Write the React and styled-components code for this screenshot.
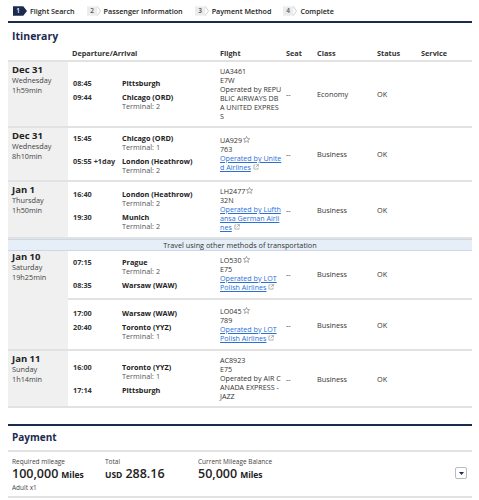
import React from 'react';
import styled, { createGlobalStyle } from 'styled-components';

const GlobalStyle = createGlobalStyle`
  body {
    margin: 0;
    background: #fff;
    font-family: "Open Sans", "Liberation Sans", sans-serif;
    color: #333;
  }
`;

const NAVY = '#1b2b50';

const days = [
  {
    date: 'Dec 31', weekday: 'Wednesday', duration: '1h59min',
    segments: [{
      stops: [
        { time: '08:45', place: 'Pittsburgh' },
        { time: '09:44', place: 'Chicago (ORD)', terminal: 'Terminal: 2' },
      ],
      flight: 'UA3461', aircraft: 'E7W', operator: 'Operated by REPUBLIC AIRWAYS DBA UNITED EXPRESS',
      seat: '--', cls: 'Economy', status: 'OK',
    }],
  },
  {
    date: 'Dec 31', weekday: 'Wednesday', duration: '8h10min',
    segments: [{
      stops: [
        { time: '15:45', place: 'Chicago (ORD)', terminal: 'Terminal: 1' },
        { time: '05:55 +1day', place: 'London (Heathrow)', terminal: 'Terminal: 2' },
      ],
      flight: 'UA929', star: true, aircraft: '763', operator: 'Operated by United Airlines', link: true,
      seat: '--', cls: 'Business', status: 'OK',
    }],
  },
  {
    date: 'Jan 1', weekday: 'Thursday', duration: '1h50min',
    segments: [{
      stops: [
        { time: '16:40', place: 'London (Heathrow)', terminal: 'Terminal: 2' },
        { time: '19:30', place: 'Munich', terminal: 'Terminal: 2' },
      ],
      flight: 'LH2477', star: true, aircraft: '32N', operator: 'Operated by Lufthansa German Airlines', link: true,
      seat: '--', cls: 'Business', status: 'OK',
    }],
    notice: 'Travel using other methods of transportation',
  },
  {
    date: 'Jan 10', weekday: 'Saturday', duration: '19h25min',
    segments: [
      {
        stops: [
          { time: '07:15', place: 'Prague', terminal: 'Terminal: 2' },
          { time: '08:35', place: 'Warsaw (WAW)' },
        ],
        flight: 'LO530', star: true, aircraft: 'E75', operator: 'Operated by LOT Polish Airlines', link: true,
        seat: '--', cls: 'Business', status: 'OK',
      },
      {
        stops: [
          { time: '17:00', place: 'Warsaw (WAW)' },
          { time: '20:40', place: 'Toronto (YYZ)', terminal: 'Terminal: 1' },
        ],
        flight: 'LO045', star: true, aircraft: '789', operator: 'Operated by LOT Polish Airlines', link: true,
        seat: '--', cls: 'Business', status: 'OK',
      },
    ],
  },
  {
    date: 'Jan 11', weekday: 'Sunday', duration: '1h14min',
    segments: [{
      stops: [
        { time: '16:00', place: 'Toronto (YYZ)', terminal: 'Terminal: 1' },
        { time: '17:14', place: 'Pittsburgh' },
      ],
      flight: 'AC8923', aircraft: 'E75', operator: 'Operated by AIR CANADA EXPRESS - JAZZ',
      seat: '--', cls: 'Business', status: 'OK',
    }],
  },
];

const steps = ['Flight Search', 'Passenger Information', 'Payment Method', 'Complete'];

const Page = styled.div`
  padding: 0 7px 0 8px;
  width: 464px;
`;

const Steps = styled.nav`
  display: flex;
  align-items: center;
  height: 21px;
  padding-left: 5px;
  gap: 12px;
  border-bottom: 2px solid ${NAVY};
`;

const Step = styled.div`
  display: flex;
  align-items: center;
  gap: 3px;
  font-size: 7.2px;
  font-weight: 600;
  color: #222;
`;

const StepBadge = ({ n, active }) => (
  <svg width="14" height="10" viewBox="0 0 15 10">
    {active ? (
      <polygon points="0,0 11,0 15,5 11,10 0,10" fill={NAVY} />
    ) : (
      <>
        <rect x="0" y="0" width="11" height="10" fill="#ececec" />
        <polyline points="11,0 14.5,5 11,10" fill="none" stroke="#cfcfcf" strokeWidth="1" />
      </>
    )}
    <text x="5.5" y="7.6" fontSize="7" textAnchor="middle" fill={active ? '#fff' : '#555'}
      fontFamily="Open Sans, sans-serif" fontWeight="600">{n}</text>
  </svg>
);

const Heading = styled.h2`
  margin: 0;
  padding: 5px 0 0 4px;
  height: 18px;
  font-size: 10.5px;
  line-height: 16px;
  font-weight: 700;
  color: ${NAVY};
`;

const HeadRow = styled.div`
  display: grid;
  grid-template-columns: 60px 147px 67px 31px 60px 44px 1fr;
  height: 14px;
  align-items: center;
  border-bottom: 2px solid #e2e2e2;
  font-size: 7.3px;
  font-weight: 700;
  color: #333;
`;

const HeadCell = styled.div`
  padding-left: ${p => p.$pad || 5}px;
`;

const Day = styled.div`
  display: flex;
  border-bottom: 2px solid #e2e2e2;
`;

const DateCell = styled.div`
  width: 60px;
  flex-shrink: 0;
  background: #f0f0f0;
  padding: 2px 0 0 4px;
  box-sizing: border-box;
`;

const DateText = styled.div`
  font-size: 9.5px;
  font-weight: 700;
  line-height: 12px;
  color: #222;
`;

const DateSub = styled.div`
  font-size: 7.3px;
  line-height: 9.5px;
  color: #444;
`;

const Segments = styled.div`
  flex: 1;
  display: flex;
  flex-direction: column;
`;

const Segment = styled.div`
  display: grid;
  grid-template-columns: 147px 67px 31px 60px 44px 1fr;
  align-items: center;
  padding: 5px 0;
  min-height: 39px;
  font-size: 7.3px;
  & + & {
    border-top: 2px solid #e2e2e2;
  }
`;

const Cell = styled.div`
  padding-left: ${p => p.$pad || 5}px;
`;

const Stops = styled.div`
  display: flex;
  flex-direction: column;
  gap: 4px;
  padding-left: 5px;
`;

const Stop = styled.div`
  display: flex;
`;

const Time = styled.div`
  width: 49px;
  flex-shrink: 0;
  font-weight: 700;
  line-height: 10px;
  color: #333;
`;

const Place = styled.div`
  line-height: 10px;
`;

const PlaceName = styled.div`
  font-weight: 700;
  color: #222;
`;

const Terminal = styled.div`
  line-height: 9px;
  color: #555;
`;

const FlightInfo = styled.div`
  font-size: 7.15px;
  line-height: 9px;
  word-break: break-all;
  color: #333;
`;

const Link = styled.a`
  color: #2b6fd8;
  text-decoration: underline;
`;

const Notice = styled.div`
  background: #e6eef8;
  border-top: 1px solid #cad8ea;
  border-bottom: 1px solid #cad8ea;
  margin-bottom: -2px;
  position: relative;
  text-align: center;
  font-size: 7.3px;
  line-height: 10px;
  color: #333;
`;

const Star = () => (
  <svg width="7" height="7" viewBox="0 0 10 10" style={{ marginLeft: 1, verticalAlign: 0 }}>
    <polygon points="5,0.6 6.3,3.6 9.5,3.8 7,5.9 7.8,9.2 5,7.4 2.2,9.2 3,5.9 0.5,3.8 3.7,3.6"
      fill="none" stroke="#777" strokeWidth="0.9" />
  </svg>
);

const ExtIcon = () => (
  <svg width="6" height="6" viewBox="0 0 10 10" style={{ marginLeft: 2 }}>
    <path d="M4 1.5H1.5v7h7V6" fill="none" stroke="#888" strokeWidth="1" />
    <path d="M5.5 1H9v3.5M9 1L4.5 5.5" fill="none" stroke="#888" strokeWidth="1" />
  </svg>
);

const PaySection = styled.section`
  margin-top: 16px;
  border-top: 2px solid ${NAVY};
`;

const PayHead = styled.h2`
  margin: 0;
  padding: 3px 0 0 4px;
  height: 21px;
  line-height: 17px;
  font-size: 10px;
  font-weight: 700;
  color: ${NAVY};
  border-bottom: 2px solid #e2e2e2;
`;

const PayRow = styled.div`
  display: flex;
  align-items: flex-start;
  padding: 5px 0 4px 4px;
  border-bottom: 2px solid #e2e2e2;
`;

const PayCol = styled.div`
  width: ${p => p.$w}px;
  flex-shrink: 0;
`;

const PayLabel = styled.div`
  font-size: 6.5px;
  line-height: 9px;
  color: #444;
`;

const PayValue = styled.div`
  font-size: 12.5px;
  font-weight: 600;
  line-height: 16px;
  color: #222;
  white-space: nowrap;
`;

const Unit = styled.span`
  font-size: ${p => p.$size || 8.5}px;
  font-weight: 700;
  margin-${p => p.$before ? 'right' : 'left'}: 3px;
`;

const PaySub = styled.div`
  font-size: 6.5px;
  line-height: 9px;
  color: #444;
`;

const Toggle = styled.button`
  margin-left: auto;
  margin-right: 5px;
  margin-top: 10px;
  width: 12px;
  height: 12px;
  padding: 0;
  border: 1px solid #bbb;
  border-radius: 2px;
  background: #fff;
  display: flex;
  align-items: center;
  justify-content: center;
`;

const SegmentRow = ({ s }) => (
  <Segment>
    <Stops>
      {s.stops.map((st, i) => (
        <Stop key={i}>
          <Time>{st.time}</Time>
          <Place>
            <PlaceName>{st.place}</PlaceName>
            {st.terminal && <Terminal>{st.terminal}</Terminal>}
          </Place>
        </Stop>
      ))}
    </Stops>
    <Cell>
      <FlightInfo>
        <div>{s.flight}{s.star && <Star />}</div>
        <div>{s.aircraft}</div>
        {s.link ? (
          <div><Link href="#">{s.operator}</Link><ExtIcon /></div>
        ) : (
          <div>{s.operator}</div>
        )}
      </FlightInfo>
    </Cell>
    <Cell $pad={4}>{s.seat}</Cell>
    <Cell $pad={4}>{s.cls}</Cell>
    <Cell $pad={4}>{s.status}</Cell>
    <Cell />
  </Segment>
);

export default function App() {
  return (
    <Page>
      <GlobalStyle />
      <Steps>
        {steps.map((label, i) => (
          <Step key={label}>
            <StepBadge n={i + 1} active={i === 0} />
            {label}
          </Step>
        ))}
      </Steps>
      <Heading>Itinerary</Heading>
      <HeadRow>
        <div />
        <HeadCell $pad={4}>Departure/Arrival</HeadCell>
        <HeadCell>Flight</HeadCell>
        <HeadCell $pad={4}>Seat</HeadCell>
        <HeadCell $pad={4}>Class</HeadCell>
        <HeadCell $pad={4}>Status</HeadCell>
        <HeadCell $pad={4}>Service</HeadCell>
      </HeadRow>
      {days.map((d, i) => (
        <React.Fragment key={i}>
          <Day>
            <DateCell>
              <DateText>{d.date}</DateText>
              <DateSub>{d.weekday}</DateSub>
              <DateSub>{d.duration}</DateSub>
            </DateCell>
            <Segments>
              {d.segments.map((s, j) => <SegmentRow key={j} s={s} />)}
            </Segments>
          </Day>
          {d.notice && <Notice>{d.notice}</Notice>}
        </React.Fragment>
      ))}
      <PaySection>
        <PayHead>Payment</PayHead>
        <PayRow>
          <PayCol $w={93}>
            <PayLabel>Required mileage</PayLabel>
            <PayValue>100,000<Unit>Miles</Unit></PayValue>
            <PaySub>Adult x1</PaySub>
          </PayCol>
          <PayCol $w={93}>
            <PayLabel>Total</PayLabel>
            <PayValue><Unit $before>USD</Unit>288.16</PayValue>
          </PayCol>
          <PayCol $w={150}>
            <PayLabel>Current Mileage Balance</PayLabel>
            <PayValue>50,000<Unit>Miles</Unit></PayValue>
          </PayCol>
          <Toggle aria-label="expand">
            <svg width="5" height="3" viewBox="0 0 5 3"><polygon points="0,0 5,0 2.5,3" fill={NAVY} /></svg>
          </Toggle>
        </PayRow>
      </PaySection>
    </Page>
  );
}
